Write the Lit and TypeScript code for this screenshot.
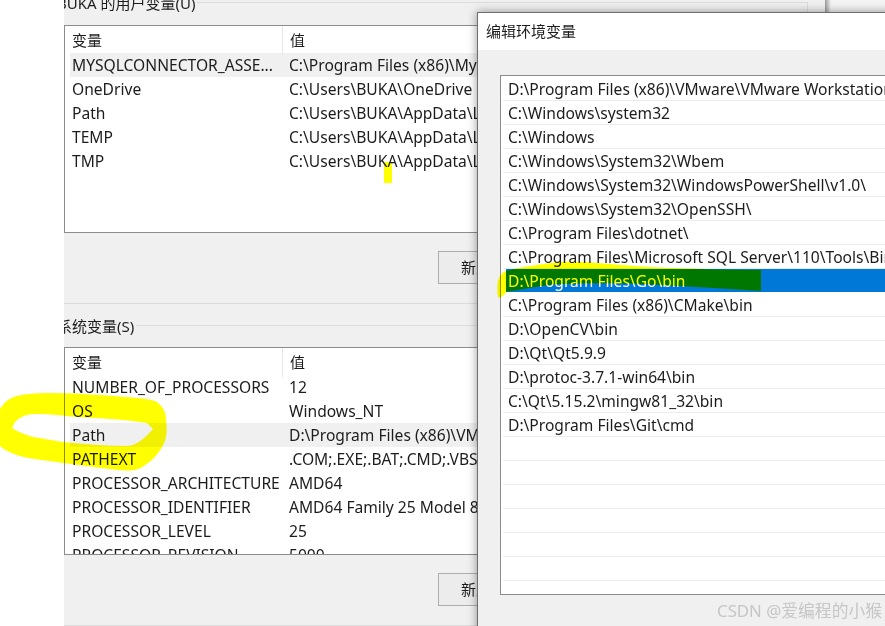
import { LitElement, html, css, svg } from "lit";
import { customElement } from "lit/decorators.js";

interface Row { name: string; value: string; selected?: boolean; }

const USER_ROWS: Row[] = [
  { name: "MYSQLCONNECTOR_ASSE...", value: "C:\\Program Files (x86)\\MySQL\\Connector", selected: true },
  { name: "OneDrive", value: "C:\\Users\\BUKA\\OneDrive" },
  { name: "Path", value: "C:\\Users\\BUKA\\AppData\\Local\\Microsoft" },
  { name: "TEMP", value: "C:\\Users\\BUKA\\AppData\\Local\\Temp" },
  { name: "TMP", value: "C:\\Users\\BUKA\\AppData\\Local\\Temp" },
];

const SYSTEM_ROWS: Row[] = [
  { name: "NUMBER_OF_PROCESSORS", value: "12" },
  { name: "OS", value: "Windows_NT" },
  { name: "Path", value: "D:\\Program Files (x86)\\VMware\\VMware", selected: true },
  { name: "PATHEXT", value: ".COM;.EXE;.BAT;.CMD;.VBS;.VBE;.JS" },
  { name: "PROCESSOR_ARCHITECTURE", value: "AMD64" },
  { name: "PROCESSOR_IDENTIFIER", value: "AMD64 Family 25 Model 80 Stepping 0" },
  { name: "PROCESSOR_LEVEL", value: "25" },
  { name: "PROCESSOR_REVISION", value: "5000" },
];

const PATHS = [
  "D:\\Program Files (x86)\\VMware\\VMware Workstation\\bin\\",
  "C:\\Windows\\system32",
  "C:\\Windows",
  "C:\\Windows\\System32\\Wbem",
  "C:\\Windows\\System32\\WindowsPowerShell\\v1.0\\",
  "C:\\Windows\\System32\\OpenSSH\\",
  "C:\\Program Files\\dotnet\\",
  "C:\\Program Files\\Microsoft SQL Server\\110\\Tools\\Binn\\",
  "D:\\Program Files\\Go\\bin",
  "C:\\Program Files (x86)\\CMake\\bin",
  "D:\\OpenCV\\bin",
  "D:\\Qt\\Qt5.9.9",
  "D:\\protoc-3.7.1-win64\\bin",
  "C:\\Qt\\5.15.2\\mingw81_32\\bin",
  "D:\\Program Files\\Git\\cmd",
  "", "", "", "", "", "",
];

@customElement("app-root")
export class AppRoot extends LitElement {
  static styles = css`
    :host {
      display: block;
      position: relative;
      width: 885px;
      height: 626px;
      overflow: hidden;
      background: #fff;
      isolation: isolate;
      font-family: "Noto Sans", "Noto Sans CJK SC", sans-serif;
      font-size: 15.6px;
      color: #1c1c1c;
    }
    .backdrop {
      position: absolute;
      left: 825px;
      top: 0;
      width: 60px;
      height: 12px;
      background: #f4f4f4;
    }
    .main {
      position: absolute;
      left: 64px;
      top: 0;
      width: 761px;
      height: 626px;
      background: #f0f0f0;
      overflow: hidden;
      padding-top: 2px;
      box-sizing: border-box;
    }
    .main-edge {
      position: absolute;
      left: 825px;
      top: 0;
      width: 6px;
      height: 12px;
      background: linear-gradient(to right, #9a9a9a, #f4f4f4);
    }
    .group {
      width: 744px;
      border: 1px solid #dcdcdc;
      border-left: none;
      box-sizing: border-box;
      margin-bottom: 21px;
      padding-bottom: 19px;
    }
    .legend {
      width: fit-content;
      height: 20px;
      line-height: 20px;
      font-size: 15px;
      margin: -10px 0 0 -7px;
      padding-right: 2px;
      background: #f0f0f0;
      white-space: nowrap;
    }
    .table {
      height: 208px;
      box-sizing: border-box;
      border: 1px solid #8c8c8c;
      background: #fff;
      overflow: hidden;
    }
    .first .table { margin-top: 12px; }
    .second .table { margin-top: 11px; }
    .head {
      display: grid;
      grid-template-columns: 218px 1fr;
      height: 27px;
      line-height: 29px;
      font-size: 15px;
    }
    .head div { padding-left: 7px; }
    .head div:first-child { border-right: 1px solid #e5e5e5; box-sizing: border-box; }
    .row {
      display: grid;
      grid-template-columns: 217px 1fr;
      height: 24px;
      line-height: 24px;
      margin-left: 5px;
      white-space: nowrap;
    }
    .row.selected { background: #f0f0f0; }
    .row div { padding-left: 2px; overflow: hidden; }
    .button {
      margin: 18px 0 0 374px;
      width: 120px;
      height: 33px;
      box-sizing: border-box;
      border: 1px solid #adadad;
      background: #ececec;
      font-size: 15px;
      line-height: 31px;
      padding-left: 22px;
      white-space: nowrap;
    }
    .dialog {
      position: absolute;
      left: 477px;
      top: 12px;
      width: 520px;
      height: 640px;
      box-sizing: border-box;
      border: 1px solid #6e6e6e;
      background: #f0f0f0;
      box-shadow: 0 0 9px rgba(0, 0, 0, 0.4);
    }
    .title {
      height: 37px;
      line-height: 37px;
      font-size: 15px;
      padding-left: 8px;
      background: #fff;
    }
    .dialog-body { padding: 25px 0 0 22px; }
    .list {
      height: 520px;
      box-sizing: border-box;
      border: 1px solid #8c8c8c;
      padding: 1px 0 0 2px;
      background: #fff;
      overflow: hidden;
    }
    .item {
      height: 24px;
      line-height: 24px;
      box-sizing: border-box;
      border-bottom: 1px solid #ececec;
      padding-left: 5px;
      white-space: nowrap;
    }
    .item.selected {
      margin-left: 3px;
      padding-left: 2px;
      background: #0078d7;
      background-clip: padding-box;
      border-bottom-color: #fff;
      color: #fff;
    }
    .marker {
      position: absolute;
      inset: 0;
      width: 885px;
      height: 626px;
      mix-blend-mode: multiply;
      pointer-events: none;
    }
    .watermark {
      position: absolute;
      right: 3px;
      top: 599px;
      font-size: 16.8px;
      line-height: 24px;
      color: #c6c6c6;
      white-space: nowrap;
    }
  `;

  private table(rows: Row[]) {
    return html`<div class="table">
      <div class="head"><div>变量</div><div>值</div></div>
      ${rows.map(
        (r) => html`<div class="row ${r.selected ? "selected" : ""}">
          <div>${r.name}</div><div>${r.value}</div>
        </div>`
      )}
    </div>`;
  }

  private marker() {
    return html`<svg class="marker" viewBox="0 0 885 626">
      ${svg`<path fill="#ff0" d="M384 162h8v21h-8z"/>
      <path fill="#ff0" fill-rule="evenodd" d="M-2 413C2 404 8 399 14 397C26 392 60 392 100 395C125 397 150 398 157 402C163 407 166 412 166 420C167 428 167 434 165 441C160 453 152 461 145 465C138 471 130 471 118 470C100 468 80 465 63 463C45 460 30 459 20 456C10 453 2 449 -2 444Z M12 428C14 423 16 420 20 418C26 414 32 414 40 414C50 414 58 415 67 416C90 418 125 419 147 423L153 429C148 435 142 440 137 443C134 445 130 446 127 446C105 446 85 444 63 442C52 440 44 439 33 437C26 435 18 432 12 428Z"/>
      <path fill="#ff0" d="M498 297C497 290 497 283 499 278C501 274 503 272 506 271C520 267 535 265 560 262C590 261 610 265 650 267C690 269 730 270 761 270L761 291C730 289 700 287 660 285C620 283 590 283 560 284C545 285 530 288 506 292C505 294 503 296 501 297C500 297.500 499 297.500 498 297Z"/>`}
    </svg>`;
  }

  render() {
    return html`
      <div class="backdrop"></div>
      <div class="main-edge"></div>
      <section class="main">
        <div class="group first">
          <div class="legend">BUKA 的用户变量(U)</div>
          ${this.table(USER_ROWS)}
          <div class="button">新建(W)...</div>
        </div>
        <div class="group second">
          <div class="legend">系统变量(S)</div>
          ${this.table(SYSTEM_ROWS)}
          <div class="button">新建(W)...</div>
        </div>
      </section>
      <section class="dialog">
        <div class="title">编辑环境变量</div>
        <div class="dialog-body">
          <div class="list">
            ${PATHS.map(
              (p, i) => html`<div class="item ${i === 8 ? "selected" : ""}">${p}</div>`
            )}
          </div>
        </div>
      </section>
      ${this.marker()}
      <div class="watermark">CSDN @爱编程的小猴</div>
    `;
  }
}
